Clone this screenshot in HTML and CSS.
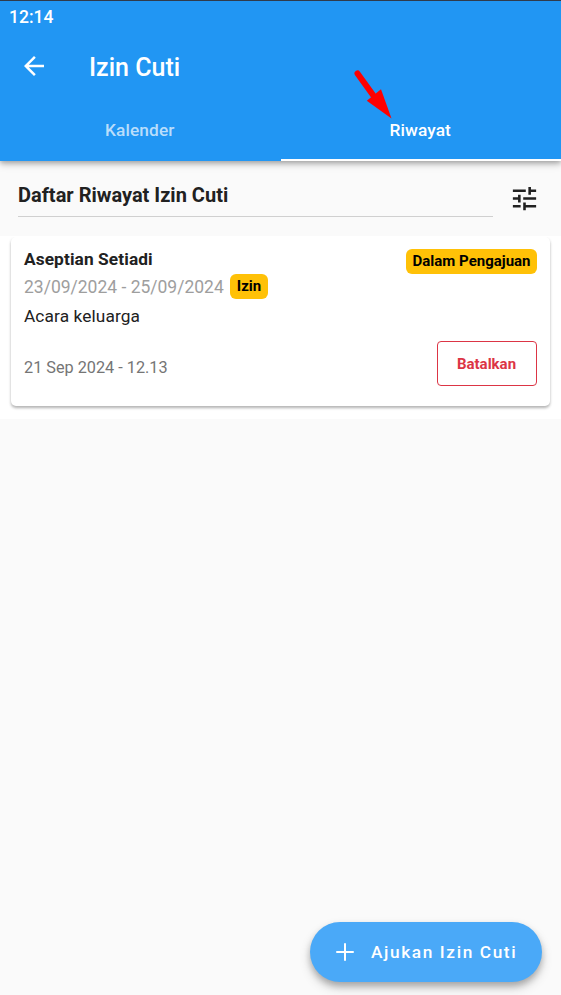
FILE: index.html
```html
<!DOCTYPE html>
<html lang="id">
<head>
<meta charset="utf-8">
<title>Izin Cuti</title>
<link rel="stylesheet" href="styles.css">
</head>
<body>
<header class="appbar">
  <div class="status"><span>12:14</span></div>
  <div class="toolbar">
    <svg class="back" viewBox="0 0 24 24"><path d="M20 11H7.83l5.59-5.59L12 4l-8 8 8 8 1.41-1.41L7.83 13H20v-2z"/></svg>
    <h1 class="title">Izin Cuti</h1>
  </div>
  <nav class="tabs">
    <div class="tab"><span>Kalender</span></div>
    <div class="tab active"><span>Riwayat</span></div>
  </nav>
  <svg class="pointer" viewBox="0 0 40 52"><path d="M6.5 5.5L22 27" stroke="#f00" stroke-width="6" stroke-linecap="round"/><path d="M30 21.3L40.5 50.5L15.8 32.7Z" fill="#f00"/></svg>
</header>
<main>
  <section class="filter">
    <h2 class="heading"><span>Daftar Riwayat Izin Cuti</span></h2>
    <svg class="tune" viewBox="0 0 24 24"><path d="M3 17v2h6v-2H3zM3 5v2h10V5H3zm10 16v-2h8v-2h-8v-2h-2v6h2zM7 9v2H3v2h4v2h2V9H7zm14 4v-2H11v2h10zm-6-4h2V7h4V5h-4V3h-2v6z"/></svg>
  </section>
  <section class="list">
    <article class="card">
      <div class="details">
        <div class="name"><span>Aseptian Setiadi</span></div>
        <div class="dates"><span class="range">23/09/2024 - 25/09/2024</span><span class="badge izin">Izin</span></div>
        <div class="reason"><span>Acara keluarga</span></div>
        <div class="created"><span>21 Sep 2024 - 12.13</span></div>
      </div>
      <div class="actions">
        <span class="badge state">Dalam Pengajuan</span>
        <button class="cancel">Batalkan</button>
      </div>
    </article>
  </section>
</main>
<button class="fab">
  <svg class="plus" viewBox="0 0 24 24"><path d="M19 12.8h-6.2v6.2h-1.6v-6.2H5v-1.6h6.2V5h1.6v6.2H19z"/></svg>
  <span>Ajukan Izin Cuti</span>
</button>
</body>
</html>
```
FILE: styles.css
```css
* { box-sizing: border-box; }
body {
  margin: 0;
  height: 995px;
  overflow: hidden;
  background: #fafafa;
  color: #212121;
  font-family: Roboto, sans-serif;
}
h1, h2 { margin: 0; }
span, h1, button { white-space: nowrap; }
.appbar {
  position: relative;
  z-index: 1;
  height: 161px;
  border-top: 1px solid #303b4b;
  background: #2196f3;
  color: #fff;
  box-shadow: 0 2px 5px rgba(0,0,0,.28), 0 4px 8px rgba(0,0,0,.12);
}
.status {
  height: 32px;
  padding-left: 9px;
  font-size: 17.5px;
  line-height: 32px;
  font-weight: 500;
}
.toolbar {
  display: flex;
  align-items: center;
  height: 66px;
  padding-left: 19px;
}
.back { width: 30px; height: 30px; fill: #fff; }
.title {
  margin-left: 40px;
  padding-top: 4px;
  font-size: 25px;
  font-weight: 500;
  line-height: 30px;
}
.tabs { display: flex; height: 62px; }
.tab {
  flex: 1;
  height: 62px;
  padding: 21px 1px 0 0;
  font-size: 17.3px;
  letter-spacing: .1px;
  font-weight: 500;
  line-height: 20px;
  text-align: center;
  color: rgba(255,255,255,.7);
}
.tab.active { border-bottom: 2px solid #fff; color: #fff; }
.pointer {
  position: absolute;
  left: 351px;
  top: 67px;
  width: 40px;
  height: 52px;
  overflow: visible;
}
.filter {
  display: flex;
  height: 75px;
  padding: 15px 21px 0 18px;
}
.heading {
  width: 475px;
  flex: none;
  height: 41px;
  border-bottom: 1px solid #d0d0d0;
  font-size: 20px;
  font-weight: 700;
  line-height: 39px;
}
.tune { flex: none; width: 31px; height: 31px; margin: 7px 0 0 16px; fill: #212121; }
.list { height: 183px; padding: 1px 11px 0; background: #fff; }
.card {
  display: flex;
  justify-content: space-between;
  height: 169px;
  padding: 12px 13px 0;
  border-radius: 5px;
  background: #fff;
  box-shadow: 0 2px 3px rgba(0,0,0,.24), 0 2px 3px rgba(0,0,0,.08);
  clip-path: inset(0 -5px -7px -5px);
}
.name { height: 20px; font-size: 17.3px; letter-spacing: .1px; line-height: 21px; font-weight: 700; }
.dates { display: flex; height: 30px; align-items: center; padding-top: 5px; }
.range { font-size: 17.5px; line-height: 24px; color: #9e9e9e; }
.badge {
  height: 25px;
  padding: 0 6.5px;
  border-radius: 6px;
  background: #ffc107;
  color: #000;
  font-size: 15px;
  line-height: 25px;
  font-weight: 700;
}
.izin { margin-left: 6.5px; }
.reason { margin-top: 5px; font-size: 17.3px; letter-spacing: .1px; line-height: 24px; }
.created { margin-top: 28px; font-size: 16.25px; line-height: 24px; color: #757575; }
.actions { display: flex; flex-direction: column; align-items: flex-end; }
.cancel {
  width: 100px;
  height: 45px;
  margin-top: 67px;
  padding: 0 1px 0 0;
  border: 1px solid #dc3545;
  border-radius: 4px;
  background: #fff;
  color: #dc3545;
  font: 700 15px Roboto, sans-serif;
}
.fab {
  position: absolute;
  left: 310px;
  top: 922px;
  display: flex;
  align-items: center;
  width: 232px;
  height: 60px;
  padding: 0 0 0 22px;
  border: 0;
  border-radius: 30px;
  background: #4aa9f8;
  color: #fff;
  box-shadow: 0 4px 6px rgba(0,0,0,.22), 0 6px 12px rgba(0,0,0,.16);
  font: 500 17.3px Roboto, sans-serif;
  letter-spacing: 1.6px;
}
.plus { width: 30px; height: 30px; margin: 0 11px 0 -2px; fill: #fff; }
```
